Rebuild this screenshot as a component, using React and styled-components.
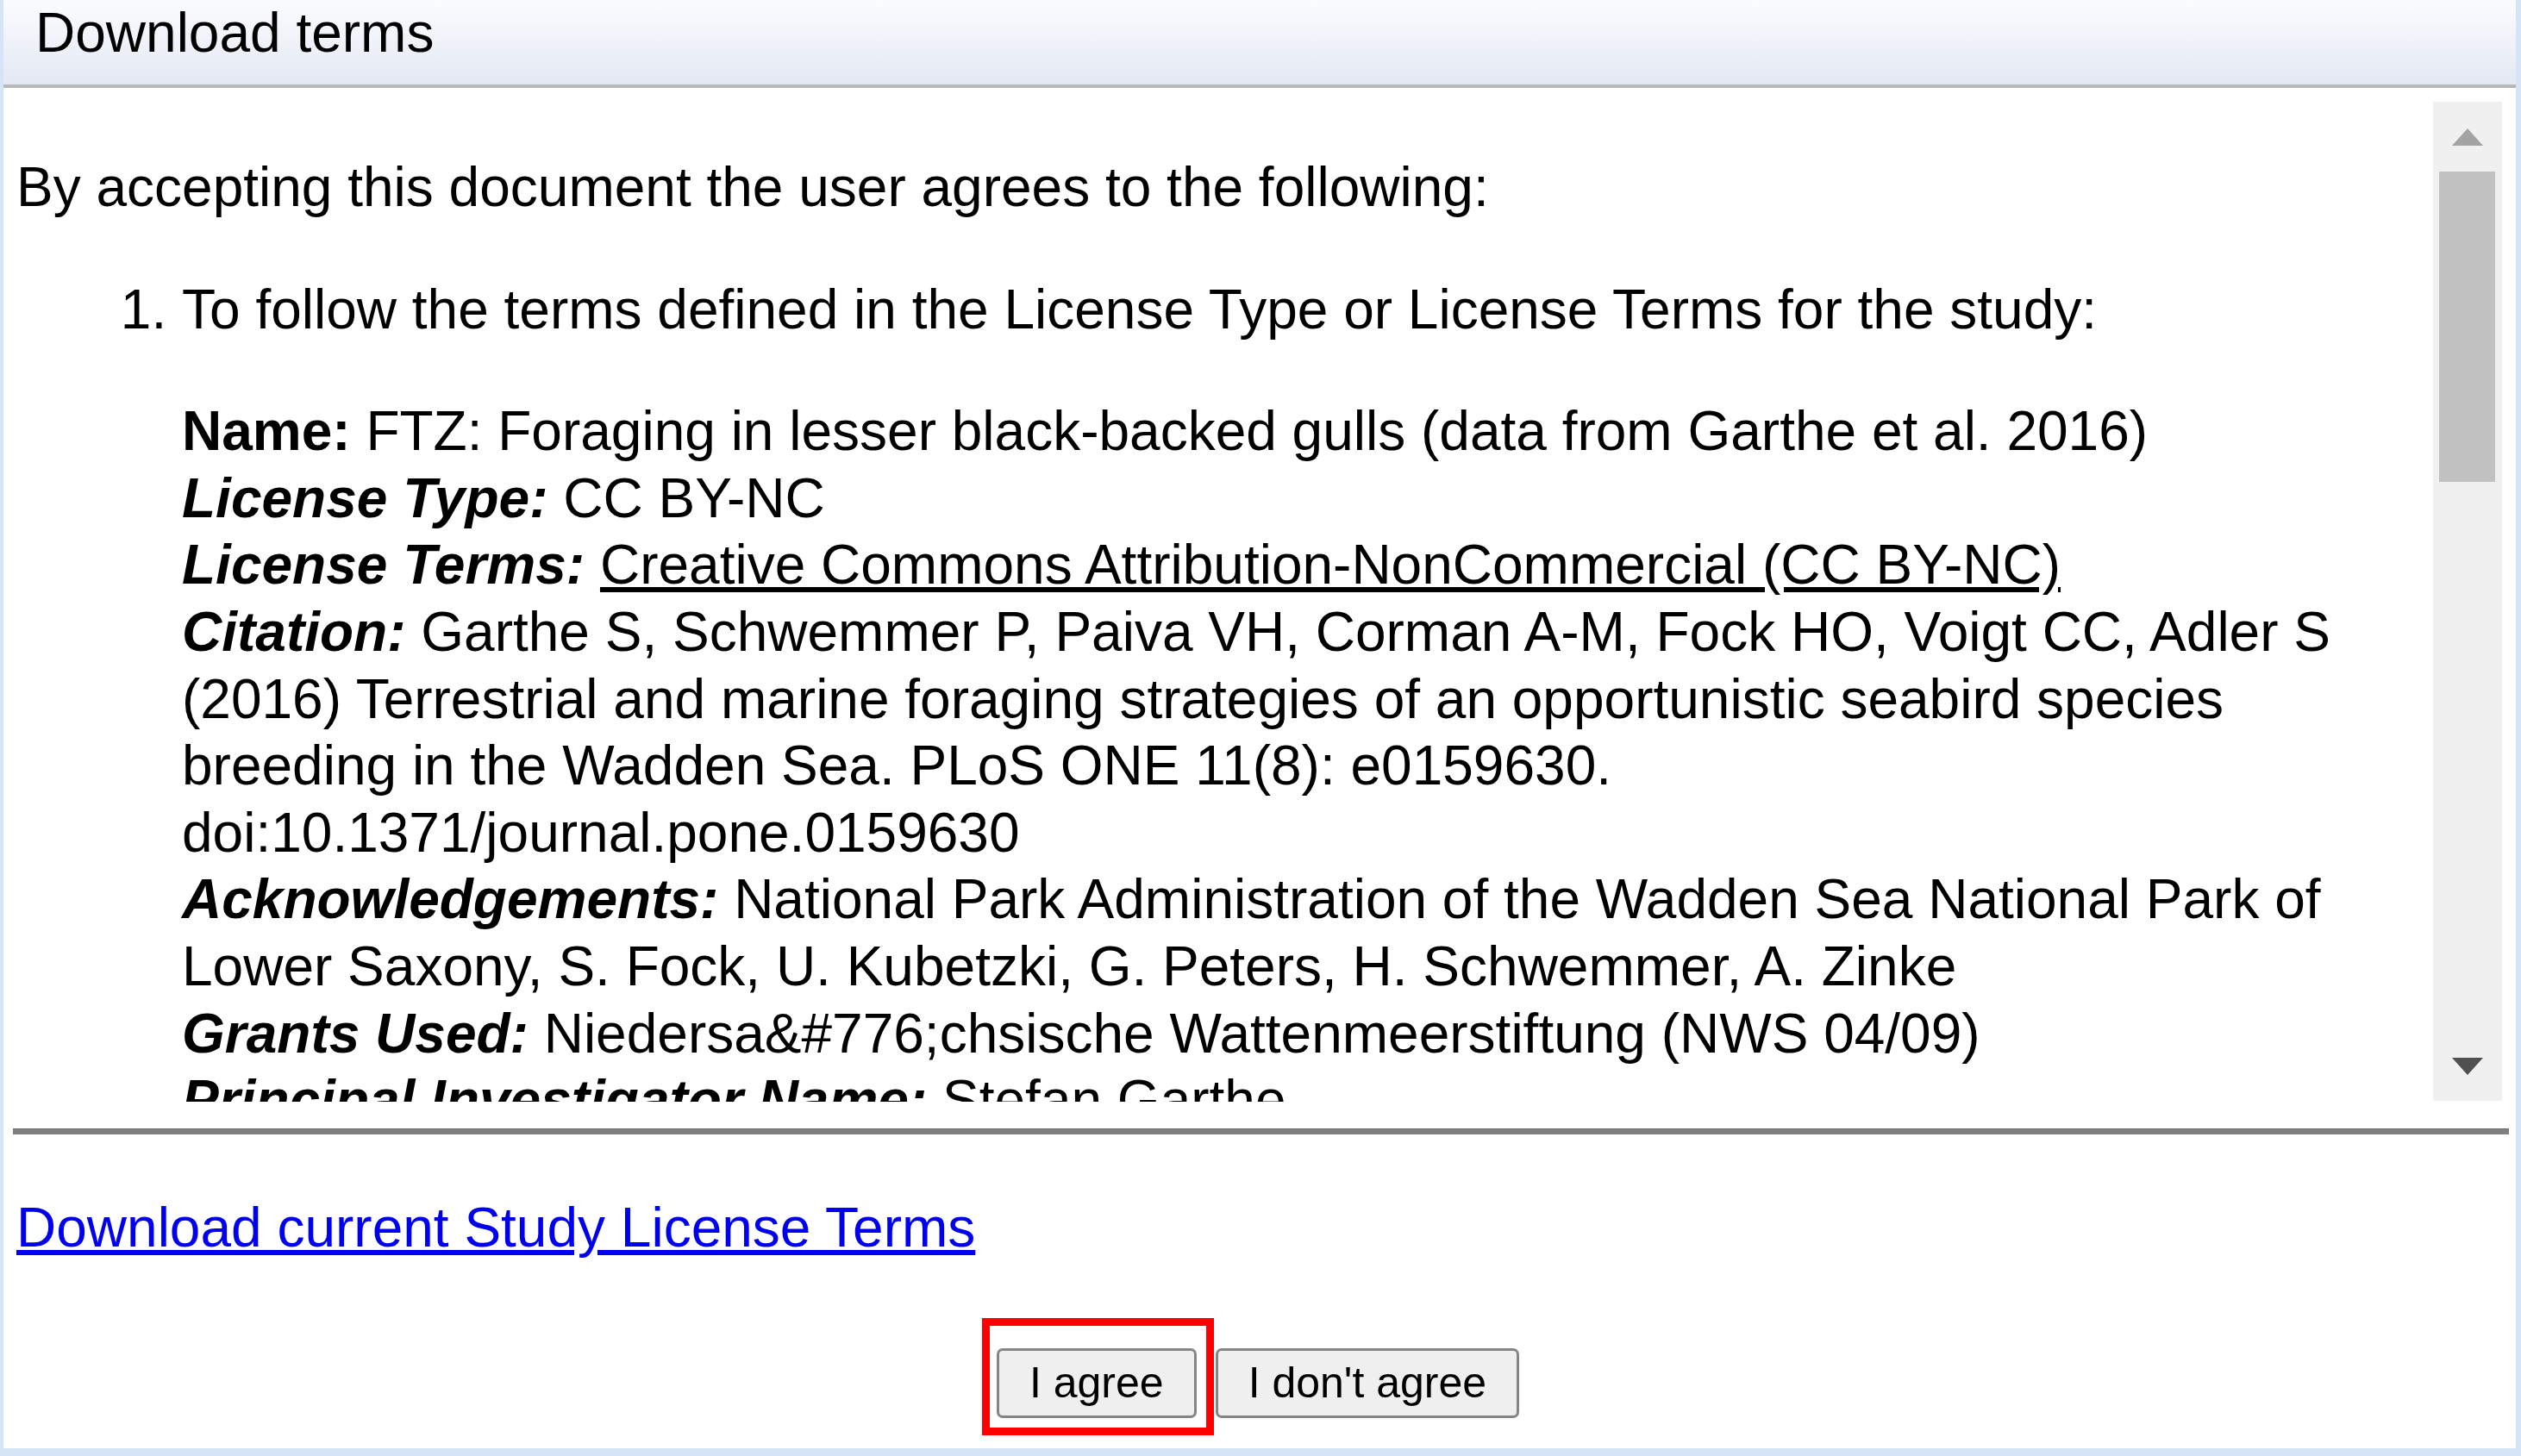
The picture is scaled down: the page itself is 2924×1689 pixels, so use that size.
import React from "react";
import styled, { createGlobalStyle } from "styled-components";

const GlobalStyle = createGlobalStyle`
  html, body {
    margin: 0;
    padding: 0;
    background: #ffffff;
  }
`;

const Dialog = styled.div`
  width: 2924px;
  height: 1689px;
  box-sizing: border-box;
  display: flex;
  flex-direction: column;
  background: #ffffff;
  border-left: 4px solid #d5e5f7;
  border-right: 6px solid #d5e5f7;
  border-bottom: 9px solid #d5e5f7;
  font-family: "Liberation Sans", Arial, sans-serif;
  color: #000;
  overflow: hidden;
`;

const TitleBar = styled.div`
  flex: none;
  height: 102px;
  box-sizing: border-box;
  padding: 2px 0 0 37px;
  border-bottom: 4px solid #b7b7b7;
  background: linear-gradient(#fbfcfe, #e3e8f3);
  font-size: 64px;
  line-height: 72px;
`;

const ScrollArea = styled.div`
  flex: none;
  height: 1176px;
  display: flex;
`;

const Content = styled.div`
  flex: 1;
  min-width: 0;
  overflow: hidden;
  padding: 13px 32px 0 15px;
  font-size: 64px;
  line-height: 77.6px;
`;

const Para = styled.p`
  margin: 64px 0;
`;

const List = styled.ol`
  margin: 64px 0;
  padding-left: 192px;
`;

const Details = styled.p`
  margin: 64px 0;
`;

const Label = styled.b`
  font-style: ${(p) => (p.$italic ? "italic" : "normal")};
`;

const Plain = styled.span`
  text-decoration: underline;
`;

const Track = styled.div`
  flex: none;
  align-self: flex-start;
  width: 80px;
  height: 1159px;
  margin: 16px 16px 0 0;
  background: #f0f0f0;
  display: flex;
  flex-direction: column;
`;

const ArrowButton = styled.div`
  flex: none;
  height: 81px;
  display: flex;
  align-items: center;
  justify-content: center;
`;

const Thumb = styled.div`
  flex: none;
  height: 360px;
  margin: 0 8px 0 7px;
  background: #c1c1c1;
`;

const TrackRest = styled.div`
  flex: 1;
`;

const Footer = styled.div`
  flex: 1;
  display: flex;
  flex-direction: column;
  padding: 0 8px 0 11px;
`;

const Rule = styled.div`
  height: 7px;
  margin-top: 31px;
  background: #808080;
  border-top: 1px solid #6a6a6a;
  box-sizing: border-box;
`;

const LinkRow = styled.div`
  margin-top: 70px;
  padding-left: 4px;
  font-size: 64px;
  line-height: 77.5px;
`;

const StudyLink = styled.a`
  color: #0000ee;
  text-decoration: underline;
  cursor: pointer;
`;

const ButtonRow = styled.div`
  margin-top: 100px;
  padding-right: 7px;
  display: flex;
  justify-content: center;
  gap: 22px;
`;

const Marked = styled.span`
  position: relative;
  display: inline-flex;
`;

const Highlight = styled.span`
  position: absolute;
  top: -35px;
  left: -17px;
  right: -20px;
  bottom: -20px;
  border: 9px solid #ff0000;
  pointer-events: none;
`;

const Button = styled.button`
  height: 81px;
  box-sizing: border-box;
  padding: 0 35px;
  border: 3px solid #858585;
  border-radius: 7px;
  background: #efefef;
  font-family: "Liberation Sans", Arial, sans-serif;
  font-size: 50px;
  color: #000;
  cursor: pointer;
`;

function Arrow({ down }) {
  return (
    <svg width="36" height="20" viewBox="0 0 36 20">
      <polygon
        points={down ? "0,0 36,0 18,20" : "18,0 36,20 0,20"}
        fill={down ? "#505050" : "#a3a3a3"}
      />
    </svg>
  );
}

export default function App() {
  return (
    <>
      <GlobalStyle />
      <Dialog>
        <TitleBar>Download terms</TitleBar>
        <ScrollArea>
          <Content>
            <Para>By accepting this document the user agrees to the following:</Para>
            <List>
              <li>
                To follow the terms defined in the License Type or License Terms for the study:
                <Details>
                  <Label>Name:</Label> FTZ: Foraging in lesser black-backed gulls (data from Garthe et al. 2016)
                  <br />
                  <Label $italic>License Type:</Label> CC BY-NC
                  <br />
                  <Label $italic>License Terms:</Label>{" "}
                  <Plain>Creative Commons Attribution-NonCommercial (CC BY-NC)</Plain>
                  <br />
                  <Label $italic>Citation:</Label> Garthe S, Schwemmer P, Paiva VH, Corman A-M, Fock HO, Voigt CC,
                  Adler S (2016) Terrestrial and marine foraging strategies of an opportunistic seabird species
                  breeding in the Wadden Sea. PLoS ONE 11(8): e0159630. doi:10.1371/journal.pone.0159630
                  <br />
                  <Label $italic>Acknowledgements:</Label> National Park Administration of the Wadden Sea National
                  Park of Lower Saxony, S. Fock, U. Kubetzki, G. Peters, H. Schwemmer, A. Zinke
                  <br />
                  <Label $italic>Grants Used:</Label> {"Niedersa&#776;chsische Wattenmeerstiftung (NWS 04/09)"}
                  <br />
                  <Label $italic>Principal Investigator Name:</Label> Stefan Garthe
                  <br />
                  <Label $italic>Contact Person Name:</Label> Stefan Garthe
                </Details>
              </li>
            </List>
          </Content>
          <Track>
            <ArrowButton>
              <Arrow />
            </ArrowButton>
            <Thumb />
            <TrackRest />
            <ArrowButton>
              <Arrow down />
            </ArrowButton>
          </Track>
        </ScrollArea>
        <Footer>
          <Rule />
          <LinkRow>
            <StudyLink>Download current Study License Terms</StudyLink>
          </LinkRow>
          <ButtonRow>
            <Marked>
              <Button>I agree</Button>
              <Highlight />
            </Marked>
            <Button>I don't agree</Button>
          </ButtonRow>
        </Footer>
      </Dialog>
    </>
  );
}
